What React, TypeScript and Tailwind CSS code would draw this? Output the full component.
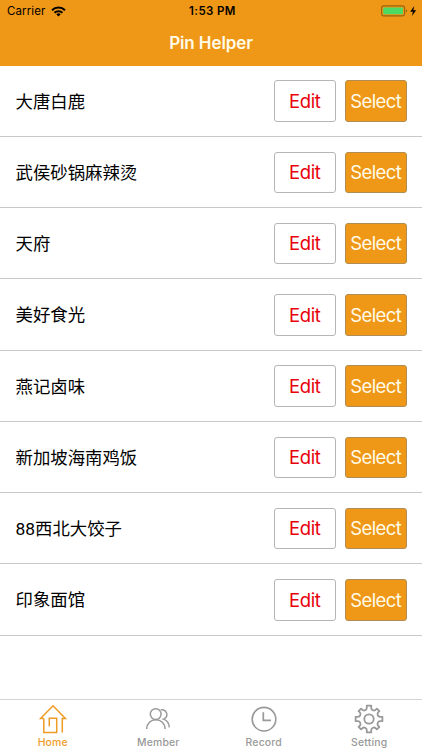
import React from 'react';

interface TabProps {
  label: string;
  active?: boolean;
  children: React.ReactNode;
}

const places = [
  '大唐白鹿',
  '武侯砂锅麻辣烫',
  '天府',
  '美好食光',
  '燕记卤味',
  '新加坡海南鸡饭',
  '88西北大饺子',
  '印象面馆',
];

const StatusBar: React.FC = () => (
  <div className="grid h-[22px] grid-cols-3 items-center pl-[7px] pr-[5px] text-black">
    <div className="flex items-center gap-[5px]">
      <span className="text-[11.5px] leading-[22px] tracking-[0.12px]">Carrier</span>
      <svg className="h-[11px] w-[15px]" viewBox="0 0 15 11" fill="none" stroke="currentColor" strokeWidth="2">
        <path d="M1 4.2a9.2 9.2 0 0 1 13 0" />
        <path d="M3.5 6.8a5.7 5.7 0 0 1 8 0" />
        <path d="M7.5 10.5 5.3 8.3a3.1 3.1 0 0 1 4.4 0z" fill="currentColor" stroke="none" />
      </svg>
    </div>
    <span className="pl-px text-center text-[11.5px] font-semibold leading-[22px] tracking-[0.4px]">1:53 PM</span>
    <svg className="h-3 w-9 justify-self-end" viewBox="0 0 36 12">
      <rect x="0.6" y="0.9" width="23" height="10" rx="2.2" fill="none" stroke="#9b6410" strokeWidth="1.1" />
      <rect x="2.2" y="2.5" width="19.8" height="6.8" rx="1" fill="#4cd964" />
      <path d="M24.8 4.2v3.4c1.8-.7 1.8-2.7 0-3.4z" fill="#9b6410" />
      <path d="M33.2 1 29.2 6.7h2.7L30.9 11l4.3-5.8h-2.8z" fill="#000" />
    </svg>
  </div>
);

const PlaceRow: React.FC<{ name: string }> = ({ name }) => (
  <li className="flex h-[71.28px] items-center border-b border-[#c8c7cc] pl-[15.5px] pr-[15.5px] pt-px">
    <span className="grow pt-px font-['Roboto','Noto_Sans_CJK_SC',sans-serif] text-[17.4px] text-black">{name}</span>
    <button className="mr-[9.5px] h-[41.5px] w-[61.5px] rounded-[3px] border border-[#b5b5b5] pt-px text-[18.5px] tracking-[-0.4px] text-[#e8000b]">
      Edit
    </button>
    <button className="h-[41.5px] w-[61.5px] rounded-[3px] border border-[#b08d55] bg-[#ef9716] pt-px text-[18.5px] tracking-[-0.6px] text-[#fffbe8]">
      Select
    </button>
  </li>
);

const Tab: React.FC<TabProps> = ({ label, active, children }) => (
  <button className={`flex flex-1 flex-col items-center pt-[4px] ${active ? 'text-[#ee9b26]' : 'text-[#999999]'}`}>
    <svg
      className="h-[30px] w-[30px]"
      viewBox="0 0 30 30"
      fill="none"
      stroke="currentColor"
      strokeWidth="1.5"
    >
      {children}
    </svg>
    <span className="mt-[2px] text-[10.4px] font-medium leading-[14px] tracking-[0.2px]">{label}</span>
  </button>
);

export default function App() {
  return (
    <div className="flex h-[750px] w-[422px] flex-col overflow-hidden bg-white font-['Inter','Noto_Sans_CJK_SC',sans-serif]">
      <header className="h-[65.5px] shrink-0 bg-[#ef9716]">
        <StatusBar />
        <h1 className="text-center text-[17px] font-semibold leading-[43px] tracking-[-0.1px] text-[#fffbe8]">Pin Helper</h1>
      </header>

      <ul className="grow">
        {places.map((name) => (
          <PlaceRow key={name} name={name} />
        ))}
      </ul>

      <nav className="flex h-[51px] shrink-0 border-t border-[#d5d5d5]">
        <Tab label="Home" active>
          <path d="M5.8 14.5H2.6L15 1.8l12.4 12.7h-3.1v14" />
          <path d="M5.8 14.5v13.9h12.9V14.3h-7.4v8" />
        </Tab>
        <Tab label="Member">
          <circle cx="12.7" cy="10.1" r="5.4" />
          <path d="M3.6 25c.3-5.4 4.2-9.3 9.3-9.3s9 3.9 9.3 9.3" />
          <path d="M17.8 5.8c3.4-.5 6.1 1.7 6.1 4.8 0 2.2-1.4 3.8-3.4 4.5 3.6 1.2 5.6 4 5.8 8.3" />
        </Tab>
        <Tab label="Record">
          <circle cx="15" cy="15.2" r="11.8" strokeWidth="1.6" />
          <path d="M14.3 8.2v8.2h7.7" strokeWidth="1.7" />
        </Tab>
        <Tab label="Setting">
          <circle cx="15" cy="15" r="4.7" strokeWidth="1.8" />
          <path
            strokeWidth="1.8"
            strokeLinejoin="round"
            d="M12.8 1.6h4.4v2.2a2.7 2.7 0 0 0 4.6 1.9l1.1-1.1 2.5 2.5-1.1 1.1a2.7 2.7 0 0 0 1.9 4.6h2.2v4.4h-2.2a2.7 2.7 0 0 0-1.9 4.6l1.1 1.1-2.5 2.5-1.1-1.1a2.7 2.7 0 0 0-4.6 1.9v2.2h-4.4v-2.2a2.7 2.7 0 0 0-4.6-1.9l-1.1 1.1-2.5-2.5 1.1-1.1a2.7 2.7 0 0 0-1.9-4.6H1.6v-4.4h2.2a2.7 2.7 0 0 0 1.9-4.6L4.6 7.1l2.5-2.5 1.1 1.1a2.7 2.7 0 0 0 4.6-1.9z"
          />
        </Tab>
      </nav>
    </div>
  );
}
